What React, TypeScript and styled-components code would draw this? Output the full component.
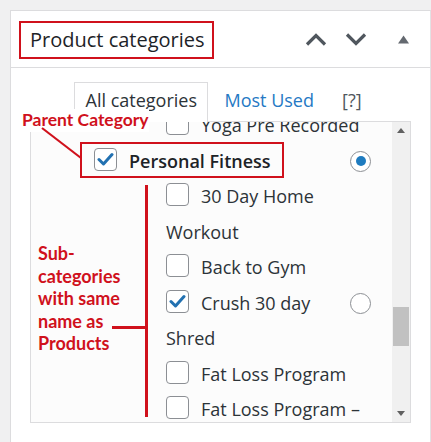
import React from "react";
import styled, { createGlobalStyle } from "styled-components";

const Global = createGlobalStyle`
  html, body { margin: 0; padding: 0; background: #f0f0f1; overflow: hidden; }
  body { font-family: "Open Sans", "Noto Sans", sans-serif; color: #2c3338; }
`;

const RED = "#d0111c";

const Page = styled.div`
  padding: 10px 0 0 10px;
  height: 442px;
  box-sizing: border-box;
`;

const Panel = styled.section`
  width: 421px;
  min-height: 480px;
  box-sizing: border-box;
  background: #fff;
  border: 1px solid #dcdcde;
  border-right-color: #e2e2e4;
`;

const Header = styled.header`
  display: flex;
  align-items: center;
  height: 56px;
  padding-left: 8px;
  border-bottom: 1px solid #dcdcde;
`;

const TitleBox = styled.h2`
  margin: 2px 0 0;
  height: 38px;
  box-sizing: border-box;
  border: 2px solid ${RED};
  padding: 0 7px 0 9px;
  font-size: 20px;
  font-weight: 400;
  line-height: 33px;
  color: #1d2327;
  white-space: nowrap;
`;

const Tools = styled.div`
  display: flex;
  align-items: center;
  margin-left: auto;
  margin-right: 21px;
`;

const ToolIcon = styled.svg<{ $gap: number }>`
  display: block;
  margin-left: ${(p) => p.$gap}px;
  color: #50575e;
`;

const Body = styled.div`
  position: relative;
  padding: 14px 19px 0 19px;
`;

const Tabs = styled.ul`
  display: flex;
  align-items: flex-start;
  list-style: none;
  margin: 0 0 -1px 44px;
  padding: 0;
  position: relative;
  z-index: 1;
  font-size: 18px;
`;

const Tab = styled.li<{ $active?: boolean }>`
  height: 40px;
  box-sizing: border-box;
  line-height: 34px;
  padding: 0 ${(p) => (p.$active ? "10.5px" : "0")};
  margin-right: ${(p) => (p.$active ? 15 : 26)}px;
  border: 1px solid ${(p) => (p.$active ? "#dcdcde" : "transparent")};
  border-bottom: none;
  background: ${(p) => (p.$active ? "#fff" : "transparent")};
  color: ${(p) => (p.$active ? "#2c3338" : "#2579c4")};
  white-space: nowrap;
  &:last-child { color: #50575e; }
`;

const ListBox = styled.div`
  display: flex;
  height: 302px;
  box-sizing: border-box;
  border: 1px solid #dcdcde;
  background: #fcfcfc;
`;

const Viewport = styled.div`
  flex: 1;
  overflow: hidden;
`;

const ScrollContent = styled.ul<{ $scroll: number }>`
  list-style: none;
  margin: ${(p) => -p.$scroll}px 0 0;
  padding: 0;
`;

const Row = styled.li<{ $level: number }>`
  display: flex;
  align-items: flex-start;
  padding: 0 21px 0 ${(p) => 63 + p.$level * 72}px;
`;

const Label = styled.label<{ $bold?: boolean }>`
  flex: 1;
  font-size: 18px;
  line-height: 35.5px;
  font-weight: ${(p) => (p.$bold ? 600 : 400)};
  color: ${(p) => (p.$bold ? "#1d2327" : "#2c3338")};
  white-space: nowrap;
`;

const Check = styled.span`
  display: inline-block;
  width: 23px;
  height: 23px;
  box-sizing: border-box;
  border: 1px solid #8c8f94;
  border-radius: 4px;
  background: #fff;
  vertical-align: -3px;
  margin-right: 12px;
  svg { display: block; margin: 3px 0 0 2px; }
`;

const Radio = styled.span<{ $on?: boolean }>`
  flex: none;
  width: 21px;
  height: 21px;
  box-sizing: border-box;
  margin-top: 7px;
  border: 1px solid #8c8f94;
  border-radius: 50%;
  background: #fff;
  display: flex;
  align-items: center;
  justify-content: center;
  &::after {
    content: "";
    display: ${(p) => (p.$on ? "block" : "none")};
    width: 10px;
    height: 10px;
    border-radius: 50%;
    background: #1e7bbf;
  }
`;

const Scrollbar = styled.div`
  width: 18px;
  flex: none;
  display: flex;
  flex-direction: column;
  background: #f0f0f0;
`;

const ScrollArrow = styled.div`
  height: 17px;
  display: flex;
  align-items: center;
  justify-content: center;
  color: #606060;
`;

const Track = styled.div`
  flex: 1;
`;

const Thumb = styled.div<{ $top: number; $size: number }>`
  margin: ${(p) => p.$top}px 1px 0;
  height: ${(p) => p.$size}px;
  background: #c1c1c1;
`;

/* annotation overlay (drawn over the panel) */
const Note = styled.div<{ $x: number; $y: number; $size: number; $bg?: boolean }>`
  position: absolute;
  left: ${(p) => p.$x}px;
  top: ${(p) => p.$y}px;
  z-index: 2;
  font-family: Lato, "Open Sans", sans-serif;
  font-weight: 700;
  font-size: ${(p) => p.$size}px;
  line-height: 22.5px;
  color: ${RED};
  background: ${(p) => (p.$bg ? "#fff" : "transparent")};
  white-space: nowrap;
`;

const Frame = styled.div<{ $x: number; $y: number; $w: number; $h: number }>`
  position: absolute;
  left: ${(p) => p.$x}px;
  top: ${(p) => p.$y}px;
  width: ${(p) => p.$w}px;
  height: ${(p) => p.$h}px;
  box-sizing: border-box;
  border: 2px solid ${RED};
  z-index: 2;
  pointer-events: none;
`;

const Bar = styled.div<{ $x: number; $y: number; $w: number; $h: number }>`
  position: absolute;
  left: ${(p) => p.$x}px;
  top: ${(p) => p.$y}px;
  width: ${(p) => p.$w}px;
  height: ${(p) => p.$h}px;
  background: ${RED};
  z-index: 2;
`;

const Pointer = styled.svg`
  position: absolute;
  left: 0;
  top: 0;
  z-index: 3;
  overflow: visible;
`;

type Item = {
  lines: string[];
  level: number;
  checked?: boolean;
  bold?: boolean;
  radio?: "on" | "off";
};

const items: Item[] = [
  { lines: ["Yoga Pre Recorded"], level: 1 },
  { lines: ["Personal Fitness"], level: 0, checked: true, bold: true, radio: "on" },
  { lines: ["30 Day Home", "Workout"], level: 1 },
  { lines: ["Back to Gym"], level: 1 },
  { lines: ["Crush 30 day", "Shred"], level: 1, checked: true, radio: "off" },
  { lines: ["Fat Loss Program"], level: 1 },
  { lines: ["Fat Loss Program –"], level: 1 },
];

const CheckMark = () => (
  <svg width="17" height="15" viewBox="0 0 17 15">
    <path d="M2 7.5 L6.5 12 L15 2.5" fill="none" stroke="#2271b1" strokeWidth="3" strokeLinecap="round" strokeLinejoin="round" />
  </svg>
);

export default function App() {
  return (
    <>
      <Global />
      <Page>
        <Panel>
          <Header>
            <TitleBox>Product categories</TitleBox>
            <Tools>
              <ToolIcon $gap={0} width="22" height="13" viewBox="0 0 22 13">
                <polyline points="2,11.5 11,2.5 20,11.5" fill="none" stroke="currentColor" strokeWidth="3.2" />
              </ToolIcon>
              <ToolIcon $gap={18} width="22" height="13" viewBox="0 0 22 13">
                <polyline points="2,1.5 11,10.5 20,1.5" fill="none" stroke="currentColor" strokeWidth="3.2" />
              </ToolIcon>
              <ToolIcon $gap={31} width="11" height="9" viewBox="0 0 11 9">
                <polygon points="0,8.5 5.5,0.5 11,8.5" fill="#646970" />
              </ToolIcon>
            </Tools>
          </Header>
          <Body>
            <Tabs>
              <Tab $active>All categories</Tab>
              <Tab>Most Used</Tab>
              <Tab>[?]</Tab>
            </Tabs>
            <ListBox>
              <Viewport>
                <ScrollContent $scroll={14}>
                  {items.map((it, i) => (
                    <Row key={i} $level={it.level}>
                      <Label $bold={it.bold}>
                        <Check>{it.checked && <CheckMark />}</Check>
                        {it.lines.map((l, j) => (
                          <React.Fragment key={j}>
                            {j > 0 && <br />}
                            {l}
                          </React.Fragment>
                        ))}
                      </Label>
                      {it.radio && <Radio $on={it.radio === "on"} />}
                    </Row>
                  ))}
                </ScrollContent>
              </Viewport>
              <Scrollbar>
                <ScrollArrow>
                  <svg width="8" height="5" viewBox="0 0 8 5"><polygon points="0,5 4,0 8,5" fill="currentColor" /></svg>
                </ScrollArrow>
                <Track>
                  <Thumb $top={168} $size={39} />
                </Track>
                <ScrollArrow>
                  <svg width="8" height="5" viewBox="0 0 8 5"><polygon points="0,0 4,5 8,0" fill="currentColor" /></svg>
                </ScrollArrow>
              </Scrollbar>
            </ListBox>

            <Note $x={11} $y={41} $size={17.5} $bg>Parent Category</Note>
            <Pointer width="1" height="1">
              <line x1="31" y1="60" x2="70" y2="90" stroke={RED} strokeWidth="2.2" />
            </Pointer>
            <Frame $x={69} $y={74} $w={204} $h={36} />
            <Bar $x={134} $y={117} $w={3} $h={232} />
            <Bar $x={101} $y={258} $w={33} $h={3} />
            <Note $x={27} $y={174} $size={18}>
              Sub-
              <br />
              categories
              <br />
              with same
              <br />
              name as
              <br />
              Products
            </Note>
          </Body>
        </Panel>
      </Page>
    </>
  );
}
